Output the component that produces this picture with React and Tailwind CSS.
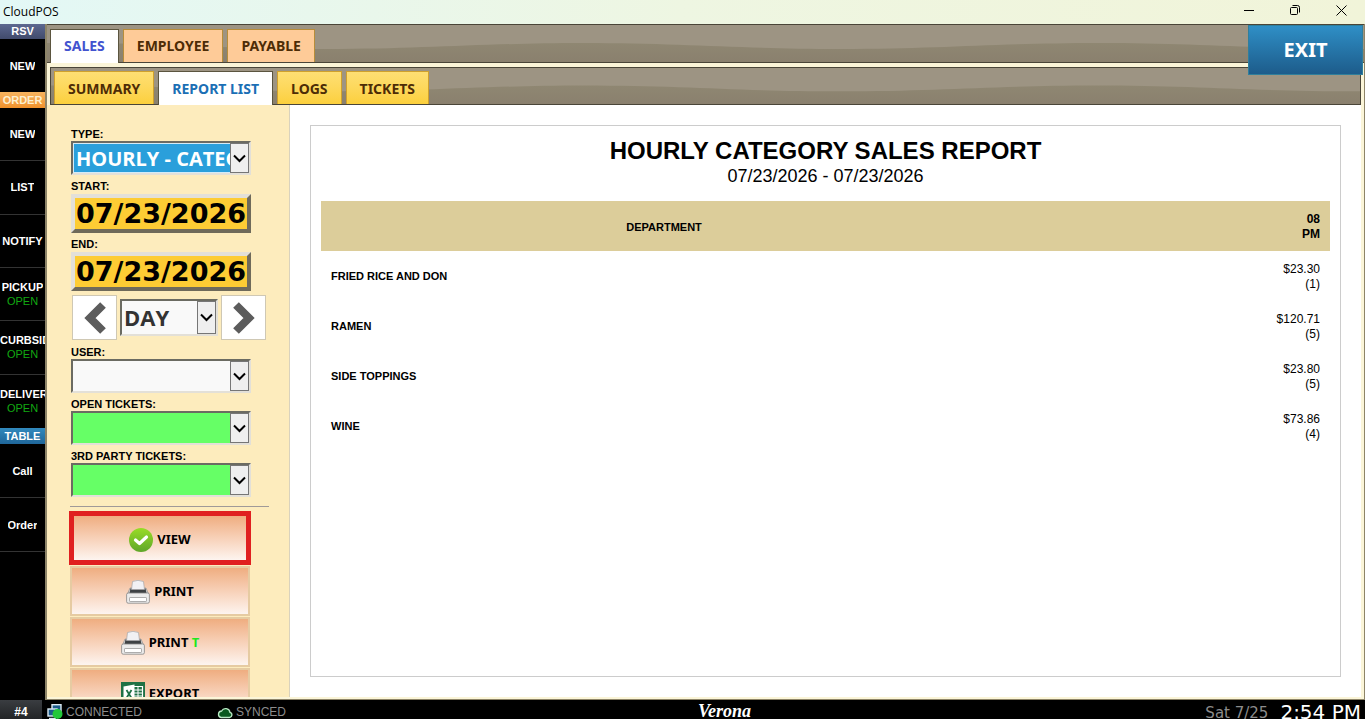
import React, { useState } from 'react'

const orderLinks = [
  { name: 'NEW' },
  { name: 'LIST' },
  { name: 'NOTIFY' },
  { name: 'PICKUP', open: true },
  { name: 'CURBSIDE', open: true },
  { name: 'DELIVERY', open: true },
]

const rows = [
  { department: 'FRIED RICE AND DON', total: '$23.30', count: 1 },
  { department: 'RAMEN', total: '$120.71', count: 5 },
  { department: 'SIDE TOPPINGS', total: '$23.80', count: 5 },
  { department: 'WINE', total: '$73.86', count: 4 },
]

function SideButton({ name, open, className = 'border-b border-[#333]' }) {
  return (
    <button
      className={`flex flex-col items-center justify-center w-full overflow-hidden text-[11px] leading-[14px] font-bold text-white ${className}`}
    >
      <span className="max-w-full overflow-hidden whitespace-nowrap">{name}</span>
      {open && <span className="font-normal text-[#12a812]">OPEN</span>}
    </button>
  )
}

// curved shading behind the tabs
function BarShade() {
  return (
    <svg
      className="absolute inset-0 w-full h-full"
      viewBox="0 0 1316 37"
      preserveAspectRatio="none"
      aria-hidden="true"
    >
      <defs>
        <linearGradient id="barShade" x1="0" y1="0" x2="0" y2="1">
          <stop offset="0" stopColor="#8f8772" />
          <stop offset="1" stopColor="#8a806e" />
        </linearGradient>
      </defs>
      <path
        d="M0 18 H21 C121 18 178 24 278 24 S436 18 536 18 S693 24 793 24 S951 18 1051 18 S1208 24 1316 24 V37 H0 Z"
        fill="url(#barShade)"
      />
    </svg>
  )
}

function Field({ id, label, children }) {
  return (
    <div>
      <label htmlFor={id} className="block h-[18px] text-[11px] leading-[22px] font-bold">
        {label}
      </label>
      {children}
    </div>
  )
}

function SelectBox({ id, label, options, height = 'h-[34px]', className = 'bg-[#f9f9f9]' }) {
  return (
    <div className={`relative ${height} border-2 border-t-[#6b6b62] border-l-[#6b6b62] border-r-[#e3e0d8] border-b-[#e3e0d8]`}>
      <select
        id={id}
        aria-label={label}
        className={`block w-full h-full appearance-none outline-none pl-0.5 font-['Open_Sans','Noto_Sans',sans-serif] font-bold ${className}`}
      >
        {options.map((option) => (
          <option key={option}>{option}</option>
        ))}
      </select>
      <span className="absolute top-0 right-0 flex items-center justify-center w-[19px] h-full bg-[#efefef] border border-[#767676] pointer-events-none">
        <svg width="13" height="9" viewBox="0 0 13 9" fill="none" stroke="#000" strokeWidth="2">
          <path d="M1 1.5 L6.5 7 L12 1.5" />
        </svg>
      </span>
    </div>
  )
}

function DateInput({ id }) {
  return (
    <input
      id={id}
      type="text"
      defaultValue="07/23/2026"
      className="block w-full h-[39px] mt-px border-4 border-t-[#e3e0d8] border-l-[#e3e0d8] border-r-[#6f6a5a] border-b-[#6f6a5a] bg-[#fdcc34] text-center outline-none font-['DejaVu_Sans',sans-serif] text-[27px] leading-8 font-bold"
    />
  )
}

function ActionButton({ icon, children }) {
  return (
    <button className="flex shrink-0 items-center justify-center gap-1 w-full h-[50px] pt-0.5 border-2 border-[#e6cba2] bg-linear-to-b from-[#efad80] to-[#fdf4ef] font-['Noto_Sans',sans-serif] text-[13px] font-bold">
      {icon}
      <span>{children}</span>
    </button>
  )
}

function CheckIcon() {
  return (
    <svg width="24" height="24" viewBox="0 0 24 24">
      <defs>
        <linearGradient id="check" x1="0" y1="0" x2="0" y2="1">
          <stop offset="0" stopColor="#98dc26" />
          <stop offset="1" stopColor="#5fa62a" />
        </linearGradient>
      </defs>
      <circle cx="12" cy="12" r="12" fill="url(#check)" />
      <path d="M6.5 12 L10.5 15.5 L17.5 9" fill="none" stroke="#fff" strokeWidth="3.2" strokeLinecap="round" strokeLinejoin="round" />
    </svg>
  )
}

function PrinterIcon() {
  return (
    <svg width="24" height="24" viewBox="0 0 24 24">
      <path d="M4 8 H20 L23 15 H1 Z" fill="#d4d4d4" stroke="#888" strokeWidth="0.6" />
      <path d="M4.5 8.5 H19.5 L20.5 13 H3.5 Z" fill="#3d4144" />
      <path d="M6.5 1.5 Q12 -0.8 17.5 1.5 L18.5 9.5 H5.5 Z" fill="#f1f1f4" stroke="#a5a5a8" strokeWidth="0.7" />
      <rect x="0.6" y="13" width="22.8" height="10.2" rx="1.6" fill="#ececec" stroke="#858585" strokeWidth="0.8" />
      <rect x="3.5" y="17.5" width="17" height="4" rx="0.6" fill="#fff" stroke="#9a9a9a" strokeWidth="0.8" />
    </svg>
  )
}

function ExcelIcon() {
  return (
    <svg width="24" height="24" viewBox="0 0 24 24">
      <rect width="24" height="24" fill="#1f7145" />
      <path d="M12 4.5 H21.5 V20 H12 Z" fill="#1f7145" stroke="#fff" strokeWidth="1.2" />
      <path d="M13 8 H21 M13 11 H21 M13 14 H21 M13 17 H21 M17 5 V20" stroke="#fff" strokeWidth="1" />
      <path d="M2.5 4.5 L13.5 2.5 V21.5 L2.5 19.5 Z" fill="#fff" />
      <path d="M5.5 8 L10.5 16 M10.5 8 L5.5 16" stroke="#1f7145" strokeWidth="1.8" />
    </svg>
  )
}

function App() {
  const [tab, setTab] = useState('SALES')
  const [subTab, setSubTab] = useState('REPORT LIST')

  return (
    <div className="flex flex-col h-screen overflow-hidden bg-black text-black font-['Liberation_Sans',Arial,sans-serif]">
      {/* window title */}
      <header className="flex items-center justify-between shrink-0 h-6 pl-[3px] pr-px bg-linear-to-r from-[#e3f8f6] via-[#eef6e2] to-[#f1f4d9]">
        <h1 className="font-['Open_Sans',sans-serif] text-xs">CloudPOS</h1>
        <div className="flex">
          <button aria-label="Minimize" className="flex items-center justify-center w-[46px] h-6 pb-1">
            <svg width="10" height="10" viewBox="0 0 10 10" stroke="#000"><path d="M0 5.5 H10" /></svg>
          </button>
          <button aria-label="Restore" className="flex items-center justify-center w-[46px] h-6 pb-1">
            <svg width="10" height="10" viewBox="0 0 10 10" fill="none" stroke="#000">
              <rect x="0.5" y="2.5" width="7" height="7" rx="1" />
              <path d="M2.5 0.5 H7.5 Q9.5 0.5 9.5 2.5 V7.5" />
            </svg>
          </button>
          <button aria-label="Close" className="flex items-center justify-center w-[46px] h-6 pb-1">
            <svg width="11" height="11" viewBox="0 0 11 11" stroke="#000"><path d="M0.5 0.5 L10.5 10.5 M10.5 0.5 L0.5 10.5" /></svg>
          </button>
        </div>
      </header>

      <div className="flex flex-1 min-h-0">
        {/* side menu */}
        <nav className="w-[45px] shrink-0 overflow-hidden">
          <h2 className="h-[15px] text-center text-[11px] leading-[15px] font-bold text-white bg-linear-to-b from-[#5d6890] to-[#414b6c]">RSV</h2>
          <SideButton name="NEW" className="h-[53px]" />
          <h2 className="h-4 text-center text-[11px] leading-[17px] font-bold text-[#fdf0d0] bg-linear-to-b from-[#f7b45f] to-[#f0912a]">ORDER</h2>
          <div className="grid grid-rows-6 h-80">
            {orderLinks.map((link) => (
              <SideButton
                key={link.name}
                {...link}
                className={link.name === 'DELIVERY' ? 'h-full' : 'h-full border-b border-[#333]'}
              />
            ))}
          </div>
          <h2 className="h-4 text-center text-[11px] leading-[17px] font-bold text-white bg-linear-to-b from-[#3189bd] to-[#1f6699]">TABLE</h2>
          <SideButton name="Call" className="h-[54px] border-b border-[#333]" />
          <SideButton name="Order" className="h-[54px] border-b border-[#333]" />
        </nav>

        <main className="relative flex flex-col flex-1 min-w-0 border-l-2 border-r border-b border-[#8d8468] bg-[#fbf5d8]">
          {/* main tabs */}
          <div className="relative flex items-end gap-1 shrink-0 h-[39px] pl-[3px] border-y border-[#4a4538] bg-[#9d9483]">
            <BarShade />
            {['SALES', 'EMPLOYEE', 'PAYABLE'].map((name) => (
              <button
                key={name}
                onClick={() => setTab(name)}
                className={`relative px-[13px] font-['Noto_Sans',sans-serif] text-[14px] leading-5 font-bold border border-b-0 ${
                  tab === name
                    ? 'h-[34px] -mb-px pb-px bg-white text-[#4253cf] border-[#5b553f]'
                    : 'h-[33px] bg-[#fecb98] text-[#4d2c06] border-[#b88d3a]'
                }`}
              >
                {name}
              </button>
            ))}
          </div>

          <button className="absolute top-px right-px w-[115px] h-[50px] border border-[#2f7f9c] bg-linear-to-b from-[#2f8fc6] to-[#1d5c8b] font-['Noto_Sans',sans-serif] text-xl font-bold text-white z-10">
            EXIT
          </button>

          <div className="flex flex-col flex-1 min-h-0 mt-1 mr-[3px] mb-0.5">
            {/* report tabs */}
            <div className="relative flex items-end gap-1 shrink-0 h-[38px] ml-[3px] pl-[3px] border border-[#4a4538] bg-[#9d9483]">
              <BarShade />
              {['SUMMARY', 'REPORT LIST', 'LOGS', 'TICKETS'].map((name) => (
                <button
                  key={name}
                  onClick={() => setSubTab(name)}
                  className={`relative px-[13px] pt-0.5 font-['Noto_Sans',sans-serif] text-[14px] leading-5 font-bold border border-b-0 ${
                    subTab === name
                      ? 'h-[34px] -mb-px pb-px bg-white text-[#1b6fb5] border-[#5b553f]'
                      : 'h-[33px] bg-linear-to-b from-[#fedf73] to-[#fcd03c] text-[#4d2c06] border-[#d0a12c]'
                  }`}
                >
                  {name}
                </button>
              ))}
            </div>

            <div className="flex flex-1 min-h-0">
              <form
                onSubmit={(e) => e.preventDefault()}
                className="w-[243px] shrink-0 overflow-hidden pt-[18px] px-5 border-r border-[#d9d2bd] bg-[#fdecbd]"
              >
                <div className="w-[180px] ml-1">
                  <Field id="type" label="TYPE:">
                    <SelectBox
                      id="type"
                      options={['HOURLY - CATEGORY']}
                      className="bg-[#2a9fdb] border border-[#d5ebf6] text-white text-[20px]"
                    />
                  </Field>
                  <Field id="start" label="START:">
                    <DateInput id="start" />
                  </Field>
                  <Field id="end" label="END:">
                    <DateInput id="end" />
                  </Field>
                </div>

                <div className="flex items-center gap-[3px] w-[194px] mt-1 mb-px ml-[5px]">
                  <button aria-label="Previous" className="flex items-center justify-center shrink-0 w-[45px] h-[45px] bg-white border border-[#cfc8b4]">
                    <svg width="24" height="32" viewBox="0 0 24 32" fill="none" stroke="#5c5c5c" strokeWidth="8"><path d="M20 3 L7 16 L20 29" /></svg>
                  </button>
                  <div className="flex-1 min-w-0">
                    <SelectBox
                      id="period"
                      label="Period"
                      options={['DAY']}
                      height="h-[37px]"
                      className="bg-[#f9f9f9] text-[#333] text-[22px]"
                    />
                  </div>
                  <button aria-label="Next" className="flex items-center justify-center shrink-0 w-[45px] h-[45px] bg-white border border-[#cfc8b4]">
                    <svg width="24" height="32" viewBox="0 0 24 32" fill="none" stroke="#5c5c5c" strokeWidth="8"><path d="M4 3 L17 16 L4 29" /></svg>
                  </button>
                </div>

                <div className="w-[180px] ml-1">
                  <Field id="user" label="USER:">
                    <SelectBox id="user" options={['']} />
                  </Field>
                  <Field id="open" label="OPEN TICKETS:">
                    <SelectBox id="open" options={['']} className="bg-[#66ff66]" />
                  </Field>
                  <Field id="party" label="3RD PARTY TICKETS:">
                    <SelectBox id="party" options={['']} className="bg-[#66ff66]" />
                  </Field>
                </div>

                <hr className="mt-[9px] ml-[3px] w-[199px] border-[#a09a98]" />

                <div className="flex flex-col gap-px w-[180px] ml-[3px] mt-1">
                  <div className="-mx-px border-[5px] border-[#e02020]">
                    <button className="flex items-center justify-center gap-1 w-full h-11 pt-1 bg-linear-to-b from-[#efad80] to-[#fdf4ef] font-['Noto_Sans',sans-serif] text-[13px] font-bold">
                      <CheckIcon />
                      <span>VIEW</span>
                    </button>
                  </div>
                  <ActionButton icon={<PrinterIcon />}>PRINT</ActionButton>
                  <ActionButton icon={<PrinterIcon />}>
                    PRINT <span className="text-[#1fe81f]">T</span>
                  </ActionButton>
                  <ActionButton icon={<ExcelIcon />}>EXPORT</ActionButton>
                </div>
              </form>

              {/* report */}
              <section className="flex flex-1 min-w-0 p-5 bg-white">
                <div className="flex-1 min-w-0 px-[10px] pt-[10px] border border-[#ccc]">
                  <h2 className="text-center text-2xl leading-[30px] font-bold">HOURLY CATEGORY SALES REPORT</h2>
                  <p className="text-center text-lg leading-5">07/23/2026 - 07/23/2026</p>
                  <table className="w-full mt-[15px] leading-[15px]">
                    <thead>
                      <tr className="h-[50px] bg-[#dccd9a] text-[11px]">
                        <th className="w-[68%] pt-0.5">DEPARTMENT</th>
                        <th className="px-[10px] pt-0.5 text-xs leading-[15px] text-right">08<br />PM</th>
                      </tr>
                    </thead>
                    <tbody>
                      {rows.map((row) => (
                        <tr key={row.department} className="h-[50px]">
                          <th scope="row" className="px-[10px] text-left text-[11px]">{row.department}</th>
                          <td className="px-[10px] pt-0.5 text-right text-xs leading-[15px]">
                            {row.total}
                            <br />({row.count})
                          </td>
                        </tr>
                      ))}
                    </tbody>
                  </table>
                </div>
              </section>
            </div>
          </div>
        </main>
      </div>

      {/* status bar */}
      <footer className="grid grid-cols-[1fr_auto_1fr] shrink-0 h-[19px] overflow-hidden text-xs leading-6 text-[#8c8c8c]">
        <div className="flex">
          <span className="w-[42px] h-6 text-center font-bold text-white bg-linear-to-b from-[#3a3d41] to-[#1c1e20]">#4</span>
          <span className="flex gap-[3px] ml-[5px] w-[170px]">
            <svg className="mt-1" width="16" height="16" viewBox="0 0 16 16">
              <rect x="5" y="0.7" width="9" height="8" fill="#1d5c8b" stroke="#dcecf5" strokeWidth="1.4" />
              <rect x="1" y="5" width="9" height="7" fill="#1d5c8b" stroke="#dcecf5" strokeWidth="1.4" />
              <path d="M2 14.5 H9" stroke="#dcecf5" strokeWidth="1.4" />
              <circle cx="10.5" cy="10" r="5" fill="#22c83a" />
            </svg>
            CONNECTED
          </span>
          <span className="flex gap-[3px]">
            <svg className="mt-[5px]" width="16" height="14" viewBox="0 0 16 14">
              <path d="M4 12.5 H12.5 A2.6 2.6 0 0 0 13 7.4 A4.5 4.5 0 0 0 4.6 6 A3.3 3.3 0 0 0 4 12.5 Z" fill="#0a5a20" stroke="#b8e8c4" strokeWidth="1.3" />
            </svg>
            SYNCED
          </span>
        </div>
        <span className="pl-[84px] font-['Liberation_Serif',serif] text-lg leading-[22px] font-bold italic text-white">Verona</span>
        <div className="flex justify-end gap-3 pr-1 font-['DejaVu_Sans',sans-serif] text-[15px] leading-[26px] whitespace-nowrap">
          <span>Sat 7/25</span>
          <span className="text-xl leading-6 text-white">2:54 PM</span>
        </div>
      </footer>
    </div>
  )
}

export default App
